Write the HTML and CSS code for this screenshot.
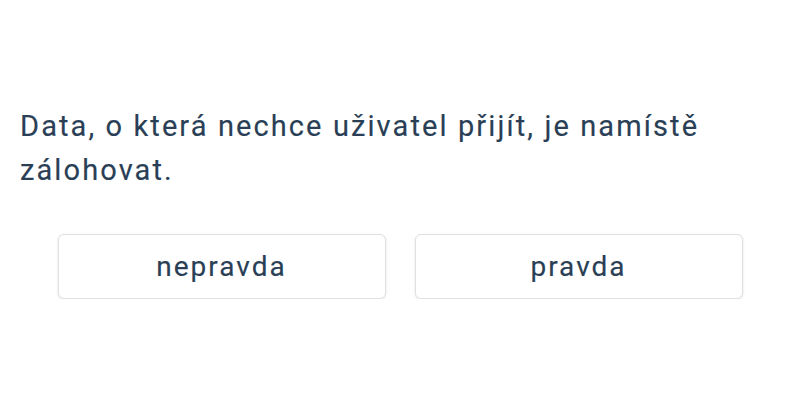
FILE: index.html
```html
<!DOCTYPE html>
<html lang="cs">
<head>
    <meta charset="UTF-8">
    <title>Otázka</title>
    <link rel="stylesheet" href="styles.css">
</head>
<body>
    <div class="quiz">
        <p class="question">Data, o která nechce uživatel přijít, je namístě zálohovat.</p>
        <div class="answers">
            <button class="answer">nepravda</button>
            <button class="answer">pravda</button>
        </div>
    </div>
</body>
</html>
```

FILE: styles.css
```css
body {
    margin: 0;
    background: #fff;
    font-family: Roboto, "Noto Sans", sans-serif;
    color: #2a3f56;
}

.quiz {
    padding: 104px 20px 0;
}

.question {
    margin: 0;
    font-size: 29px;
    line-height: 44px;
    letter-spacing: 2.1px;
    -webkit-text-stroke: 0.15px #2a3f56;
}

.answers {
    display: flex;
    justify-content: center;
    gap: 29px;
    margin-top: 42px;
}

.answer {
    width: 328px;
    height: 65px;
    padding: 0;
    background: #fff;
    border: 1px solid #e0e0e0;
    border-radius: 6px;
    box-shadow: 0 1px 3px rgba(0,0,0,0.1);
    font-family: inherit;
    font-size: 28px;
    letter-spacing: 2px;
    -webkit-text-stroke: 0.15px #2a3f56;
    color: #2a3f56;
    cursor: pointer;
}
```
